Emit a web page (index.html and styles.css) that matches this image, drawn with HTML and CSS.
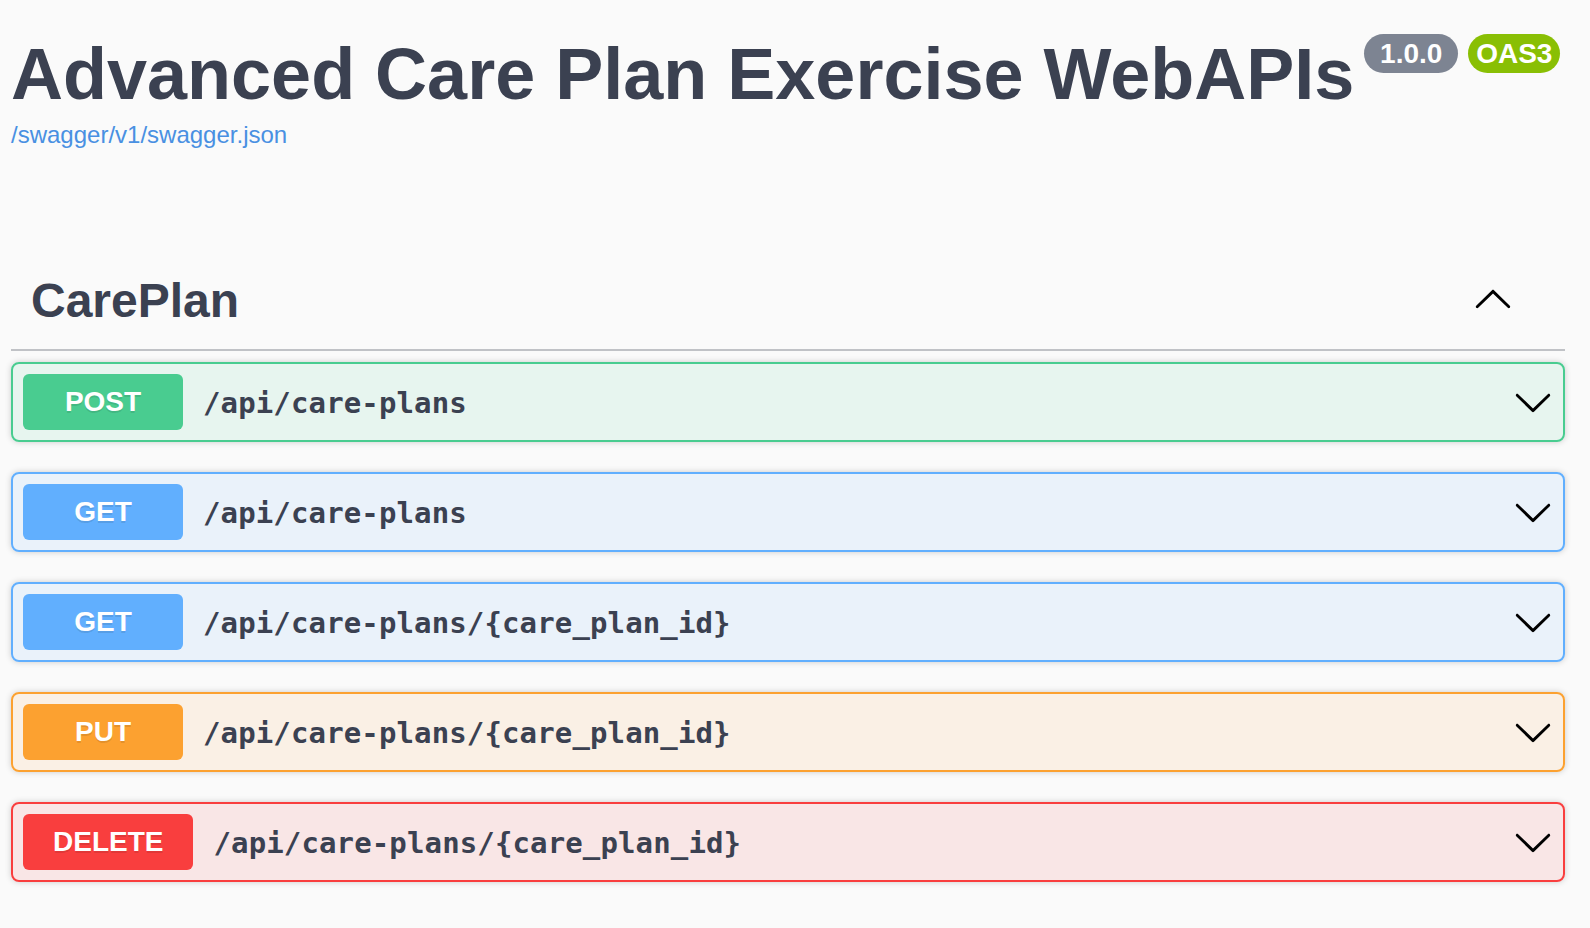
FILE: index.html
```html
<!DOCTYPE html>
<html lang="en">
<head>
<meta charset="utf-8">
<title>Advanced Care Plan Exercise WebAPIs</title>
<link rel="stylesheet" href="styles.css">
</head>
<body>
<div class="page">
  <div class="info">
    <h2 class="title">
      <span class="title-text">Advanced Care Plan Exercise WebAPIs</span>
      <small class="stamp"><pre class="version"> 1.0.0 </pre></small>
      <small class="stamp oas"><pre class="version">OAS3</pre></small>
    </h2>
    <a class="spec-link" href="#">/swagger/v1/swagger.json</a>
  </div>

  <section class="tag-section">
    <h3 class="tag">
      <span class="tag-name">CarePlan</span>
      <button class="tag-toggle" type="button" aria-label="Collapse">
        <svg class="arrow up" viewBox="0 0 20 20" width="40" height="40"><path transform="rotate(180 10 10)" d="M17.418 6.109c.272-.268.709-.268.979 0s.271.701 0 .969l-7.908 7.83c-.27.268-.707.268-.979 0l-7.908-7.83c-.27-.268-.27-.701 0-.969.271-.268.709-.268.979 0L10 13.25l7.418-7.141z"/></svg>
      </button>
    </h3>

    <div class="opblock post">
      <span class="method">POST</span>
      <span class="path">/api/care-plans</span>
      <svg class="arrow" viewBox="0 0 20 20" width="40" height="40"><path d="M17.418 6.109c.272-.268.709-.268.979 0s.271.701 0 .969l-7.908 7.83c-.27.268-.707.268-.979 0l-7.908-7.83c-.27-.268-.27-.701 0-.969.271-.268.709-.268.979 0L10 13.25l7.418-7.141z"/></svg>
    </div>

    <div class="opblock get">
      <span class="method">GET</span>
      <span class="path">/api/care-plans</span>
      <svg class="arrow" viewBox="0 0 20 20" width="40" height="40"><path d="M17.418 6.109c.272-.268.709-.268.979 0s.271.701 0 .969l-7.908 7.83c-.27.268-.707.268-.979 0l-7.908-7.83c-.27-.268-.27-.701 0-.969.271-.268.709-.268.979 0L10 13.25l7.418-7.141z"/></svg>
    </div>

    <div class="opblock get">
      <span class="method">GET</span>
      <span class="path">/api/care-plans/{care_plan_id}</span>
      <svg class="arrow" viewBox="0 0 20 20" width="40" height="40"><path d="M17.418 6.109c.272-.268.709-.268.979 0s.271.701 0 .969l-7.908 7.83c-.27.268-.707.268-.979 0l-7.908-7.83c-.27-.268-.27-.701 0-.969.271-.268.709-.268.979 0L10 13.25l7.418-7.141z"/></svg>
    </div>

    <div class="opblock put">
      <span class="method">PUT</span>
      <span class="path">/api/care-plans/{care_plan_id}</span>
      <svg class="arrow" viewBox="0 0 20 20" width="40" height="40"><path d="M17.418 6.109c.272-.268.709-.268.979 0s.271.701 0 .969l-7.908 7.83c-.27.268-.707.268-.979 0l-7.908-7.83c-.27-.268-.27-.701 0-.969.271-.268.709-.268.979 0L10 13.25l7.418-7.141z"/></svg>
    </div>

    <div class="opblock delete">
      <span class="method">DELETE</span>
      <span class="path">/api/care-plans/{care_plan_id}</span>
      <svg class="arrow" viewBox="0 0 20 20" width="40" height="40"><path d="M17.418 6.109c.272-.268.709-.268.979 0s.271.701 0 .969l-7.908 7.83c-.27.268-.707.268-.979 0l-7.908-7.83c-.27-.268-.27-.701 0-.969.271-.268.709-.268.979 0L10 13.25l7.418-7.141z"/></svg>
    </div>
  </section>
</div>
</body>
</html>
```

FILE: styles.css
```css
html, body {
  margin: 0;
  padding: 0;
  background: #fafafa;
}

body {
  font-family: "Liberation Sans", Arial, sans-serif;
  color: #3b4151;
}

.page {
  padding: 33px 25px 0 11px;
}

.title {
  display: flex;
  align-items: flex-start;
  margin: 0;
  font-size: 72px;
  line-height: 83px;
  font-weight: 700;
  color: #3b4151;
}

.stamp {
  display: inline-block;
  margin: 1px 0 0 10px;
  padding: 4px 8px;
  border-radius: 114px;
  background: #7d8492;
}

.stamp.oas {
  background: #89bf04;
}

.version {
  margin: 0;
  padding: 0;
  font-family: "Liberation Sans", Arial, sans-serif;
  font-size: 28px;
  line-height: 31px;
  font-weight: 700;
  color: #fff;
}

.spec-link {
  display: block;
  margin-top: 5px;
  font-size: 24px;
  line-height: 28px;
  color: #4990e2;
  text-decoration: none;
}

.tag-section {
  margin-top: 105px;
}

.tag {
  display: flex;
  align-items: center;
  justify-content: space-between;
  margin: 0 0 11px;
  padding: 19px 52px 21px 20px;
  border-bottom: 2px solid rgba(59, 65, 81, 0.3);
  font-size: 48px;
  line-height: 55px;
  font-weight: 700;
  color: #3b4151;
}

.tag-toggle {
  display: flex;
  margin: 0 0 2px;
  padding: 0;
  border: none;
  background: none;
}

.arrow {
  display: block;
  width: 40px;
  height: 40px;
  fill: #000;
}

.opblock {
  display: flex;
  align-items: center;
  margin: 0 0 30px;
  padding: 10px;
  border: 2px solid #000;
  border-radius: 8px;
  box-shadow: 0 0 6px rgba(0, 0, 0, 0.19);
}

.method {
  box-sizing: border-box;
  min-width: 160px;
  padding: 12px 30px;
  border-radius: 6px;
  font-family: "Liberation Sans", Arial, sans-serif;
  font-size: 28px;
  line-height: 32px;
  font-weight: 700;
  text-align: center;
  color: #fff;
  text-shadow: 0 2px 0 rgba(0, 0, 0, 0.1);
}

.path {
  flex: 1;
  padding: 2px 20px 0;
  font-family: "DejaVu Sans Mono", monospace;
  font-size: 29px;
  letter-spacing: 0.13px;
  font-weight: 700;
  color: #3b4151;
}

.opblock .arrow {
  margin-left: auto;
}

.post {
  border-color: #49cc90;
  background: rgba(73, 204, 144, 0.1);
}
.post .method { background: #49cc90; }

.get {
  border-color: #61affe;
  background: rgba(97, 175, 254, 0.1);
}
.get .method { background: #61affe; }

.put {
  border-color: #fca130;
  background: rgba(252, 161, 48, 0.1);
}
.put .method { background: #fca130; }

.delete {
  border-color: #f93e3e;
  background: rgba(249, 62, 62, 0.1);
}
.delete .method { background: #f93e3e; }
```
